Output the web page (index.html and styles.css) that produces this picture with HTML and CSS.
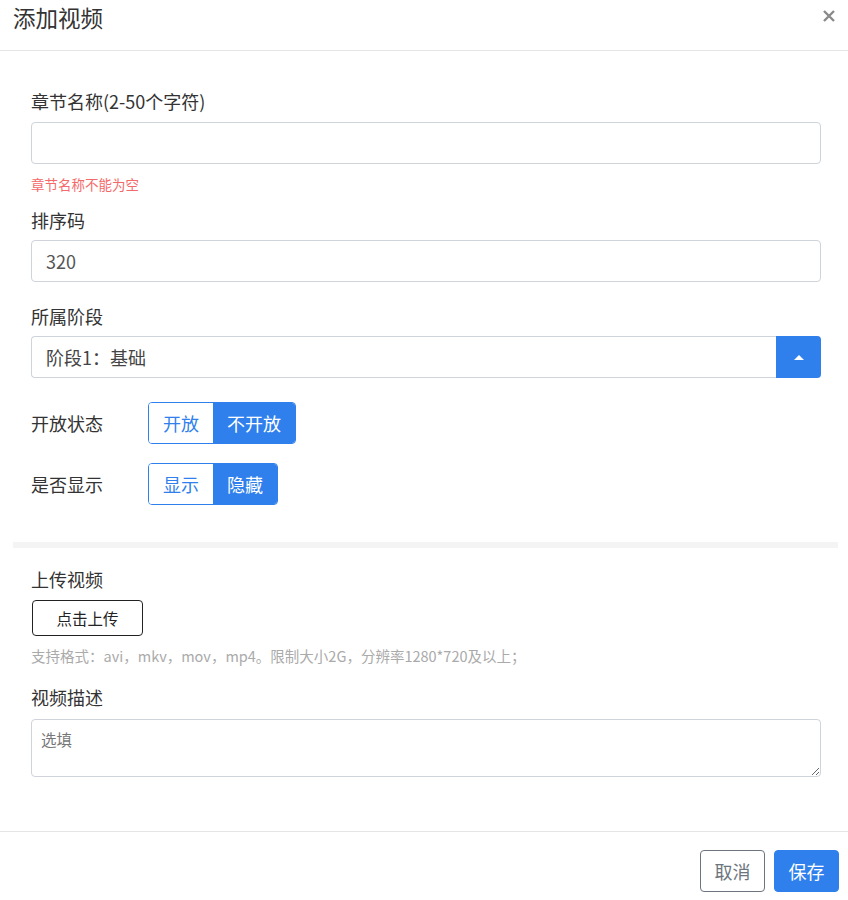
FILE: index.html
```html
<!DOCTYPE html>
<html lang="zh-CN">
<head>
<meta charset="utf-8">
<title>添加视频</title>
<link rel="stylesheet" href="styles.css">
</head>
<body>
<div class="modal">
  <div class="modal-header">
    <h1 class="modal-title">添加视频</h1>
    <svg class="close" width="12" height="12" viewBox="0 0 12 12" aria-label="关闭">
      <path d="M1 1 L11 11 M11 1 L1 11" stroke="#8a8a8a" stroke-width="2.4" stroke-linecap="butt" fill="none"/>
    </svg>
  </div>
  <div class="section section-top">
    <div class="field">
      <label class="label">章节名称(2-50个字符)</label>
      <input class="input" type="text">
      <div class="error">章节名称不能为空</div>
    </div>
    <div class="field field-2">
      <label class="label">排序码</label>
      <input class="input" type="text" value="320">
    </div>
    <div class="field field-3">
      <label class="label">所属阶段</label>
      <div class="select">
        <span class="select-text">阶段1：基础</span>
        <span class="select-btn"><span class="caret"></span></span>
      </div>
    </div>
    <div class="toggle-row toggle-row-1">
      <span class="toggle-label">开放状态</span>
      <div class="btn-group">
        <span class="seg">开放</span>
        <span class="seg active">不开放</span>
      </div>
    </div>
    <div class="toggle-row toggle-row-2">
      <span class="toggle-label">是否显示</span>
      <div class="btn-group">
        <span class="seg">显示</span>
        <span class="seg active">隐藏</span>
      </div>
    </div>
  </div>
  <div class="separator"></div>
  <div class="section section-bottom">
    <div class="label">上传视频</div>
    <button class="upload-btn" type="button">点击上传</button>
    <div class="hint">支持格式：avi，mkv，mov，mp4。限制大小2G，分辨率1280*720及以上；</div>
    <div class="label label-desc">视频描述</div>
    <textarea class="textarea" placeholder="选填"></textarea>
  </div>
  <div class="modal-footer">
    <button class="btn btn-cancel" type="button">取消</button>
    <button class="btn btn-save" type="button">保存</button>
  </div>
</div>
</body>
</html>
```

FILE: styles.css
```css
* { box-sizing: border-box; }
html, body { margin: 0; padding: 0; background: #fff; }
body {
  font-family: "Noto Sans CJK SC", "Microsoft YaHei", "Noto Sans", sans-serif;
  color: #333;
}
.modal { width: 848px; }

.modal-header {
  display: flex;
  align-items: center;
  justify-content: space-between;
  padding: 1px 13px 17px 13px;
  border-bottom: 1px solid #e5e5e5;
}
.modal-title {
  margin: 0;
  font-size: 22.5px;
  line-height: 32px;
  font-weight: 400;
  color: #333;
}
.close {
  display: block;
  margin-top: -2px;
}

.section { padding-left: 31px; padding-right: 27px; }
.section-top { padding-top: 38px; padding-bottom: 37px; }
.section-bottom { padding-top: 19px; padding-bottom: 54px; }

.label {
  display: block;
  font-size: 18px;
  line-height: 24px;
  color: #333;
}
.input {
  display: block;
  width: 100%;
  height: 42px;
  margin-top: 9px;
  border: 1px solid #ced4da;
  border-radius: 4px;
  padding: 0 14px;
  font-family: inherit;
  font-size: 18px;
  color: #555;
  outline: none;
}
.field-2 .input { margin-top: 8px; }
.error {
  margin-top: 12px;
  font-size: 13.5px;
  line-height: 16px;
  color: #f46a6a;
}
.field-2 { margin-top: 16px; }
.field-3 { margin-top: 22px; }

.select {
  display: flex;
  align-items: stretch;
  height: 42px;
  margin-top: 8px;
  border: 1px solid #ced4da;
  border-right: none;
  border-radius: 4px;
}
.select-text {
  flex: 1;
  display: flex;
  align-items: center;
  padding-left: 14px;
  font-size: 18px;
  color: #444;
}
.select-btn {
  width: 45px;
  margin: -1px 0;
  background: #2f80ed;
  border-radius: 0 4px 4px 0;
  display: flex;
  align-items: center;
  justify-content: center;
}
.caret {
  width: 0;
  height: 0;
  border-left: 5px solid transparent;
  border-right: 5px solid transparent;
  border-bottom: 5px solid #fff;
}

.toggle-row { display: flex; align-items: center; }
.toggle-row-1 { margin-top: 24px; }
.toggle-row-2 { margin-top: 19px; }
.toggle-label {
  width: 117px;
  font-size: 18px;
  color: #333;
}
.btn-group {
  display: flex;
  height: 42px;
  border: 1px solid #2f80ed;
  border-radius: 4px;
  overflow: hidden;
}
.seg {
  display: flex;
  align-items: center;
  padding: 0 14px;
  font-size: 18px;
  color: #2f80ed;
  background: #fff;
}
.seg.active { background: #2f80ed; color: #fff; }

.separator {
  height: 6px;
  margin: 0 10px 0 13px;
  background: #f4f4f4;
}

.upload-btn {
  display: block;
  margin-top: 9px;
  margin-left: 1px;
  width: 111px;
  height: 36px;
  border: 1px solid #222;
  border-radius: 4px;
  background: #fff;
  font-family: inherit;
  font-size: 15.5px;
  color: #222;
  padding: 0;
}
.hint {
  margin-top: 11px;
  font-size: 14.5px;
  line-height: 18px;
  color: #aaa;
}
.label-desc { margin-top: 20px; }
.textarea {
  display: block;
  width: 100%;
  height: 58px;
  margin-top: 10px;
  border: 1px solid #ced4da;
  border-radius: 4px;
  padding: 8px 9px;
  font-family: inherit;
  font-size: 15.5px;
  line-height: 22px;
  color: #555;
  outline: none;
}
.textarea::placeholder { color: #777; }

.modal-footer {
  display: flex;
  justify-content: flex-end;
  gap: 9px;
  padding: 18px 9px 8px 0;
  border-top: 1px solid #e5e5e5;
}
.btn {
  width: 65px;
  height: 42px;
  border-radius: 4px;
  font-family: inherit;
  font-size: 18px;
  padding: 0;
}
.btn-cancel {
  background: #fff;
  border: 1px solid #6c757d;
  color: #6c757d;
}
.btn-save {
  background: #2f80ed;
  border: 1px solid #2f80ed;
  color: #fff;
}
```
